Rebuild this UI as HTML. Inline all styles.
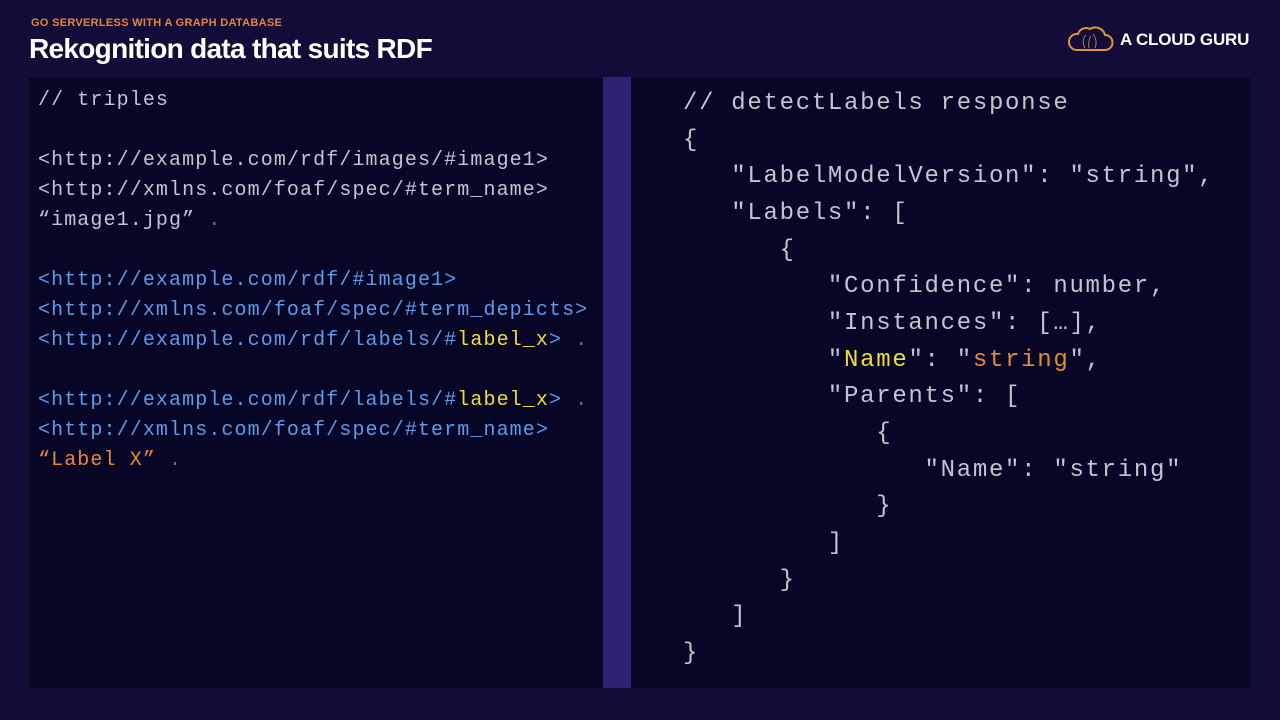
<!DOCTYPE html>
<html><head><meta charset="utf-8"><style>
body{margin:0;width:1280px;height:720px;background:#120c38;overflow:hidden;position:relative;font-family:"Liberation Sans",sans-serif}
.sub{position:absolute;left:31px;top:17px;font-size:11px;font-weight:bold;color:#e8843a;letter-spacing:0.3px}
.title{position:absolute;left:29px;top:33px;font-size:28px;font-weight:bold;color:#fff;letter-spacing:-0.7px}
.logo{position:absolute;left:1120px;top:30px;font-size:17px;font-weight:bold;color:#fff;letter-spacing:-0.2px}
.lp{position:absolute;left:29px;top:78px;width:574px;height:610px;background:#080626}
.strip{position:absolute;left:603px;top:77px;width:28px;height:611px;background:#2d2272}
.rp{position:absolute;left:631px;top:78px;width:619px;height:610px;background:#080626}
pre{margin:0;position:absolute;font-family:"Liberation Mono",monospace;color:#c4c4d0}
.l{left:38px;top:86px;font-size:20px;line-height:30px;letter-spacing:1.1px}
.r{left:683px;top:86px;font-size:24px;line-height:36.67px;letter-spacing:1.7px}
.b{color:#5b9bea}.y{color:#f0dc3c}.o{color:#e8883a}.d{color:#6a6a80}
</style></head><body>
<div class="sub">GO SERVERLESS WITH A GRAPH DATABASE</div>
<div class="title">Rekognition data that suits RDF</div>
<svg style="position:absolute;left:1068px;top:25px" width="46" height="28" viewBox="0 0 46 28"><path d="M8 25 H37 A7.5 7.5 0 0 0 37 10 A10 10 0 0 0 22 4 A8.5 8.5 0 0 0 10 9 A8 8 0 0 0 8 25 Z" fill="none" stroke="#e8903a" stroke-width="2"/><path d="M17 23 C14 18 15 13 18 10 M27 23 C29 18 28 13 25 9 M21 23 C20 18 21 14 23 11" fill="none" stroke="#b07a40" stroke-width="1"/></svg>
<div class="logo">A CLOUD GURU</div>
<div class="lp"></div><div class="strip"></div><div class="rp"></div>
<pre class="l">// triples

&lt;http://example.com/rdf/images/#image1&gt;
&lt;http://xmlns.com/foaf/spec/#term_name&gt;
“image1.jpg” <span class="d">.</span>

<span class="b">&lt;http://example.com/rdf/#image1&gt;
&lt;http://xmlns.com/foaf/spec/#term_depicts&gt;
&lt;http://example.com/rdf/labels/#</span><span class="y">label_x</span><span class="b">&gt;</span> <span class="d">.</span>

<span class="b">&lt;http://example.com/rdf/labels/#</span><span class="y">label_x</span><span class="b">&gt;</span> <span class="d">.</span>
<span class="b">&lt;http://xmlns.com/foaf/spec/#term_name&gt;</span>
<span class="o">“Label X”</span> <span class="d">.</span></pre>
<pre class="r">// detectLabels response
{
   "LabelModelVersion": "string",
   "Labels": [
      {
         "Confidence": number,
         "Instances": […],
         "<span class="y">Name</span>": "<span class="o">string</span>",
         "Parents": [
            {
               "Name": "string"
            }
         ]
      }
   ]
}</pre>
</body></html>
